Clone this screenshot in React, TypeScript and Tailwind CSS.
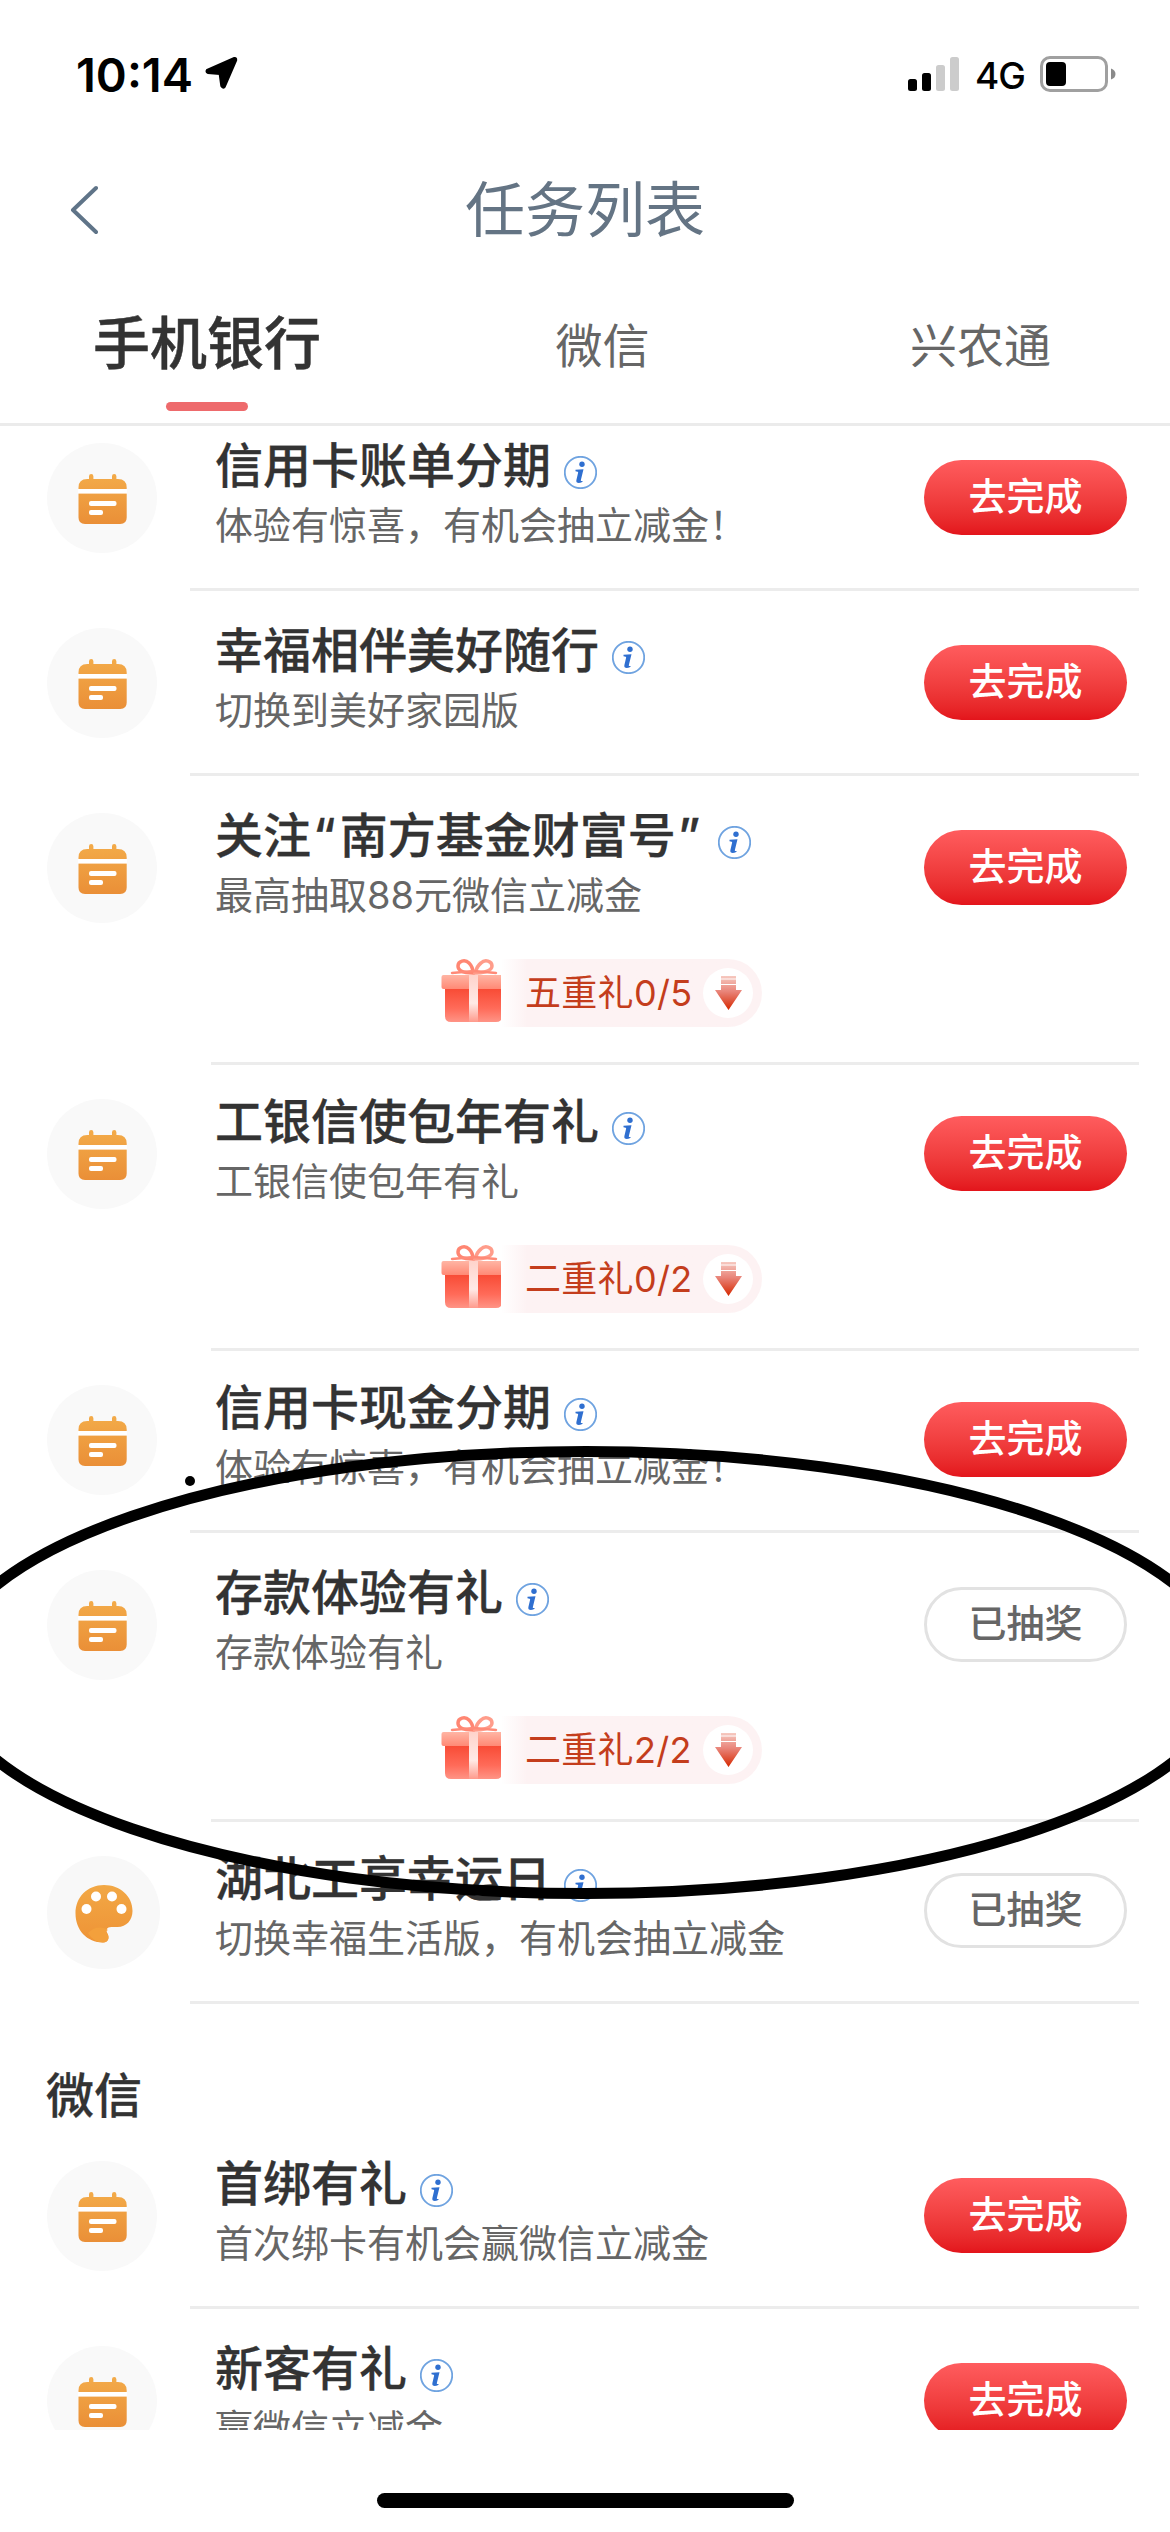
import React, { useState } from 'react';

interface Task {
  id: number;
  title: string;
  desc: string;
  icon: 'calendar' | 'palette';
  done: boolean;
  gift?: string;
}

const bankTasks: Task[] = [
  { id: 1, title: '信用卡账单分期', desc: '体验有惊喜，有机会抽立减金！', icon: 'calendar', done: false },
  { id: 2, title: '幸福相伴美好随行', desc: '切换到美好家园版', icon: 'calendar', done: false },
  { id: 3, title: '关注“南方基金财富号”', desc: '最高抽取88元微信立减金', icon: 'calendar', done: false, gift: '五重礼0/5' },
  { id: 4, title: '工银信使包年有礼', desc: '工银信使包年有礼', icon: 'calendar', done: false, gift: '二重礼0/2' },
  { id: 5, title: '信用卡现金分期', desc: '体验有惊喜，有机会抽立减金！', icon: 'calendar', done: false },
  { id: 6, title: '存款体验有礼', desc: '存款体验有礼', icon: 'calendar', done: true, gift: '二重礼2/2' },
  { id: 7, title: '湖北工享幸运日', desc: '切换幸福生活版，有机会抽立减金', icon: 'palette', done: true },
];

const wechatTasks: Task[] = [
  { id: 8, title: '首绑有礼', desc: '首次绑卡有机会赢微信立减金', icon: 'calendar', done: false },
  { id: 9, title: '新客有礼', desc: '赢微信立减金', icon: 'calendar', done: false },
];

const StatusBar: React.FC = () => (
  <div className="flex h-[150px] items-start justify-between pt-[52px] pr-[54px] pl-[76px]">
    <div className="flex h-11 items-center gap-[11px] text-black">
      <span className="text-[47px] leading-none font-semibold">10:14</span>
      <svg className="-mt-0.5" width="34" height="34" viewBox="0 0 32 32">
        <path d="M28.600 2.200 3 13.400q-.900 1.600.600 2.200L15 16.600l1.600 11.600q1.200 2.200 2.600.600L30 4q.200-2.200-1.400-1.800z" fill="#000" stroke="#000" strokeWidth="2.500" strokeLinejoin="round" />
      </svg>
    </div>
    <div className="flex h-11 items-center">
      <svg width="51" height="36" viewBox="0 0 51 36">
        <rect x="0" y="23" width="9" height="12" rx="2.500" fill="#000" />
        <rect x="14" y="17" width="9" height="18" rx="2.500" fill="#000" />
        <rect x="28" y="9" width="9" height="26" rx="2.500" fill="#ccc" />
        <rect x="42" y="1" width="9" height="34" rx="2.500" fill="#ccc" />
      </svg>
      <span className="mt-0.5 ml-4 w-[50px] text-[37px] leading-none font-medium tracking-tight text-black">4G</span>
      <svg className="ml-[15px]" width="76" height="36" viewBox="0 0 76 36">
        <rect x="1.500" y="1.500" width="65" height="33" rx="8.500" fill="none" stroke="#a0a0a0" strokeWidth="3" />
        <rect x="6" y="6" width="20" height="24" rx="4" fill="#000" />
        <path d="M71 12.500q4.500 1.500 4.500 5.500t-4.500 5.500z" fill="#8a8a8a" />
      </svg>
    </div>
  </div>
);

const CalendarIcon: React.FC = () => (
  <div className="flex size-[110px] items-center justify-center rounded-full bg-[#f9f9f9]">
    <svg className="mt-px" width="49" height="50" viewBox="0 0 49 50">
      <defs>
        <linearGradient id="cal" x1="0" y1="0" x2="0" y2="1">
          <stop offset="0" stopColor="#f3ab49" />
          <stop offset="1" stopColor="#ea8f37" />
        </linearGradient>
      </defs>
      <path d="M11 2.200a2.200 2.200 0 0 1 4.400 0V5H34V2.200a2.200 2.200 0 0 1 4.400 0V5h1.600q8.700 0 8.700 8.500V43.500q0 6.500-6.500 6.500H7Q.5 50 .5 43.500V13.500Q.5 5 9.200 5H11z" fill="url(#cal)" />
      <rect x="0" y="15" width="49" height="4.600" fill="#fff" />
      <rect x="11" y="27" width="27.500" height="5" rx="2" fill="#fff" />
      <rect x="11" y="36" width="14" height="5" rx="2" fill="#fff" />
    </svg>
  </div>
);

const PaletteIcon: React.FC = () => (
  <div className="flex size-[113px] items-center justify-center rounded-full bg-[#f8f8f8]">
    <svg className="mt-0.5" width="58" height="58" viewBox="0 0 58 58">
      <defs>
        <linearGradient id="pal" x1="0" y1="0" x2="0" y2="1">
          <stop offset="0" stopColor="#f2a845" />
          <stop offset="1" stopColor="#ee9336" />
        </linearGradient>
      </defs>
      <path d="M29 0C45 0 57.500 11 57.500 26c0 9-6 16-15 16h-6c-5 0-6 3-4 6.500 2 3.500 1.500 9-4.500 9C12 57.500.5 45 .5 28.500.5 12 12.500 0 29 0z" fill="url(#pal)" />
      <path d="M13 48c5-6 14-7.500 20-3-3 1-2 2.500-.5 4 2 3.500 1 8.500-4.500 8.500-6 0-11-3-15-9.500z" fill="#f3a03c" />
      <circle cx="11.500" cy="24" r="5" fill="#fff" />
      <circle cx="21" cy="11.500" r="5" fill="#fff" />
      <circle cx="37" cy="11.500" r="5" fill="#fff" />
      <circle cx="46.500" cy="24" r="5" fill="#fff" />
    </svg>
  </div>
);

const InfoIcon: React.FC = () => (
  <svg width="33" height="33" viewBox="0 0 33 33">
    <circle cx="16.500" cy="16.500" r="15.700" fill="#fff" stroke="#6fa3e0" strokeWidth="1.800" />
    <circle cx="18" cy="8.300" r="2.700" fill="#2f6fd0" />
    <path d="M11.500 13.800l8-.6-2.700 11q-.2 1.300 2.300.7-1.500 2.100-4.200 2.100-3.200 0-2.500-3l1.700-7.300q.3-1.500-2.600-1.500z" fill="#2f6fd0" />
  </svg>
);

const GiftIcon: React.FC = () => (
  <svg className="-mt-1 ml-px shrink-0" width="64" height="64" viewBox="0 0 64 64">
    <defs>
      <linearGradient id="giftBox" x1="0" y1="0" x2="0" y2="1">
        <stop offset="0" stopColor="#f84a34" />
        <stop offset="0.600" stopColor="#ff6b59" />
        <stop offset="1" stopColor="#ff9486" />
      </linearGradient>
      <linearGradient id="giftLid" x1="0" y1="0" x2="0" y2="1">
        <stop offset="0" stopColor="#ffb5a4" />
        <stop offset="1" stopColor="#ff8975" />
      </linearGradient>
      <linearGradient id="ribbon" x1="0" y1="0" x2="0" y2="1">
        <stop offset="0" stopColor="#ffd3cb" />
        <stop offset="0.600" stopColor="#ffeae6" />
        <stop offset="1" stopColor="#ff9a8c" />
      </linearGradient>
    </defs>
    <path d="M4 29h57v28q0 6-6 6H10q-6 0-6-6z" fill="url(#giftBox)" />
    <rect x="0.500" y="16" width="63" height="14" rx="2" fill="url(#giftLid)" />
    <rect x="28" y="16" width="9" height="47" fill="url(#ribbon)" />
    <path d="M32 14C27 14 17 14 17 7c0-5 7-7 11-3 3 3 4 7 4 10z" fill="none" stroke="#ff8672" strokeWidth="3.500" />
    <path d="M34 14c5 0 17-1 17-7 0-5-7-7-11-3-4 3-5 7-6 10z" fill="none" stroke="#ff9c8a" strokeWidth="3.500" />
    <path d="M11 14l22-2 22 2" fill="none" stroke="#ff8a77" strokeWidth="2.500" strokeLinecap="round" />
  </svg>
);

const DownArrow: React.FC = () => (
  <div className="flex size-[50px] shrink-0 items-center justify-center rounded-full bg-white">
    <svg width="27" height="34" viewBox="0 0 27 34">
      <defs>
        <linearGradient id="arrow" x1="0" y1="0" x2="0" y2="1">
          <stop offset="0" stopColor="#f6c9c0" />
          <stop offset="0.450" stopColor="#e9857a" />
          <stop offset="1" stopColor="#d62800" />
        </linearGradient>
      </defs>
      <path d="M6 0h15v2.500H6zM6 3.500h15v4.500H6zM6 9h15v5h6L13.500 34 0 14h6z" fill="url(#arrow)" />
    </svg>
  </div>
);

const GiftBadge: React.FC<{ label: string }> = ({ label }) => (
  <div className="flex h-[68px] w-[322px] items-center">
    <GiftIcon />
    <div className="-ml-1 flex h-[68px] flex-1 items-center justify-between rounded-r-full bg-linear-to-r from-white to-[#fdf2f3] to-10% pr-[9px] pl-[24px]">
      <span className="text-[36px] leading-none tracking-[0.3px] whitespace-nowrap text-[#c43d1c]">{label}</span>
      <DownArrow />
    </div>
  </div>
);

const TaskTitle: React.FC<{ text: string }> = ({ text }) => (
  <h3 className="text-[48px] leading-none font-medium whitespace-nowrap text-[#333] [-webkit-text-stroke:0.3px_#333]">
    {text.split(/([“”])/).map((part, i) =>
      part === '“' || part === '”' ? (
        <span key={i} className={part === '“' ? 'pr-[4px] pl-[2px]' : 'pr-[5px] pl-[2px]'}>
          {part}
        </span>
      ) : (
        part
      )
    )}
  </h3>
);

const TaskRow: React.FC<{ task: Task }> = ({ task }) => (
  <div>
    <div className={`flex items-start pl-[47px] ${task.gift ? 'h-[183px]' : 'h-[182px]'}`}>
      <div className="w-[168px] shrink-0 pt-[37px]">
        {task.icon === 'calendar' ? <CalendarIcon /> : <PaletteIcon />}
      </div>
      <div className="flex-1 pt-[31px]">
        <div className="flex h-[58px] items-center">
          <TaskTitle text={task.title} />
          <span className="mt-[13px] ml-[13px]">
            <InfoIcon />
          </span>
        </div>
        <p className="mt-[6px] text-[38px] leading-[48px] whitespace-nowrap text-[#666]">{task.desc}</p>
      </div>
      <button
        className={`mt-[54px] mr-[43px] h-[75px] w-[203px] rounded-full pb-[3px] text-[38px] leading-none font-medium ${
          task.done
            ? 'border-[3px] border-[#e2e2e2] bg-white text-[#666]'
            : 'bg-linear-to-b from-[#ff5c5e] to-[#e3141b] text-white'
        }`}
      >
        {task.done ? '已抽奖' : '去完成'}
      </button>
    </div>
    {task.gift ? (
      <>
        <div className="flex h-[103px] pl-[440px]">
          <GiftBadge label={task.gift} />
        </div>
        <div className="mr-[31px] -mb-[3px] ml-[211px] h-[3px] bg-[#ececec]" />
      </>
    ) : (
      <div className="mr-[31px] ml-[190px] h-[3px] bg-[#ececec]" />
    )}
  </div>
);

export default function App() {
  const tabs = ['手机银行', '微信', '兴农通'];
  const [activeTab, setActiveTab] = useState(tabs[0]);

  return (
    <div className="relative flex h-[2532px] w-[1170px] flex-col overflow-hidden bg-white font-['Inter','Noto_Sans_CJK_SC',sans-serif]">
      <StatusBar />

      {/* Header */}
      <header className="flex h-[120px] items-center justify-between px-[70px]">
        <svg width="28" height="50" viewBox="0 0 28 50">
          <path d="M26 3 3 25l23 22" fill="none" stroke="#5f7488" strokeWidth="4" strokeLinecap="round" strokeLinejoin="round" />
        </svg>
        <h1 className="text-[60px] leading-none text-[#647484]">任务列表</h1>
        <span className="w-[28px]" />
      </header>

      {/* Tabs */}
      <nav className="flex h-[156px] shrink-0 border-b-[3px] border-[#ebebeb]">
        {tabs.map((tab) => (
          <button
            key={tab}
            onClick={() => setActiveTab(tab)}
            className={`flex flex-col items-center ${
              tab === activeTab
                ? 'w-[414px] pt-[44px] text-[57px] leading-[60px] font-medium text-[#333] [-webkit-text-stroke:0.5px_#333]'
                : 'pt-[46px] text-[47px] leading-[60px] text-[#666] first:w-[414px] last:flex-1 nth-2:w-[377px]'
            }`}
          >
            {tab}
            {tab === activeTab && <span className="mt-[28px] h-[9px] w-[82px] rounded-full bg-[#ee6a6c]" />}
          </button>
        ))}
      </nav>

      {/* Scrolled task list */}
      <main className="h-[2004px] shrink-0 overflow-hidden">
        <div className="-mt-5">
          {bankTasks.map((task) => (
            <TaskRow key={task.id} task={task} />
          ))}
          <h2 className="h-[120px] pt-[63px] pl-[46px] text-[48px] leading-[57px] font-medium text-[#333] [-webkit-text-stroke:0.3px_#333]">
            微信
          </h2>
          {wechatTasks.map((task) => (
            <TaskRow key={task.id} task={task} />
          ))}
        </div>
      </main>

      {/* Home indicator */}
      <div className="mx-auto mt-[63px] h-[15px] w-[417px] rounded-full bg-black" />

      {/* Pen mark drawn over the list */}
      <svg className="pointer-events-none absolute inset-0" width="1170" height="2532" viewBox="0 0 1170 2532">
        <ellipse cx="586" cy="1672.500" rx="642" ry="221" fill="none" stroke="#000" strokeWidth="11" />
        <circle cx="190" cy="1481" r="5" fill="#000" />
      </svg>
    </div>
  );
}
